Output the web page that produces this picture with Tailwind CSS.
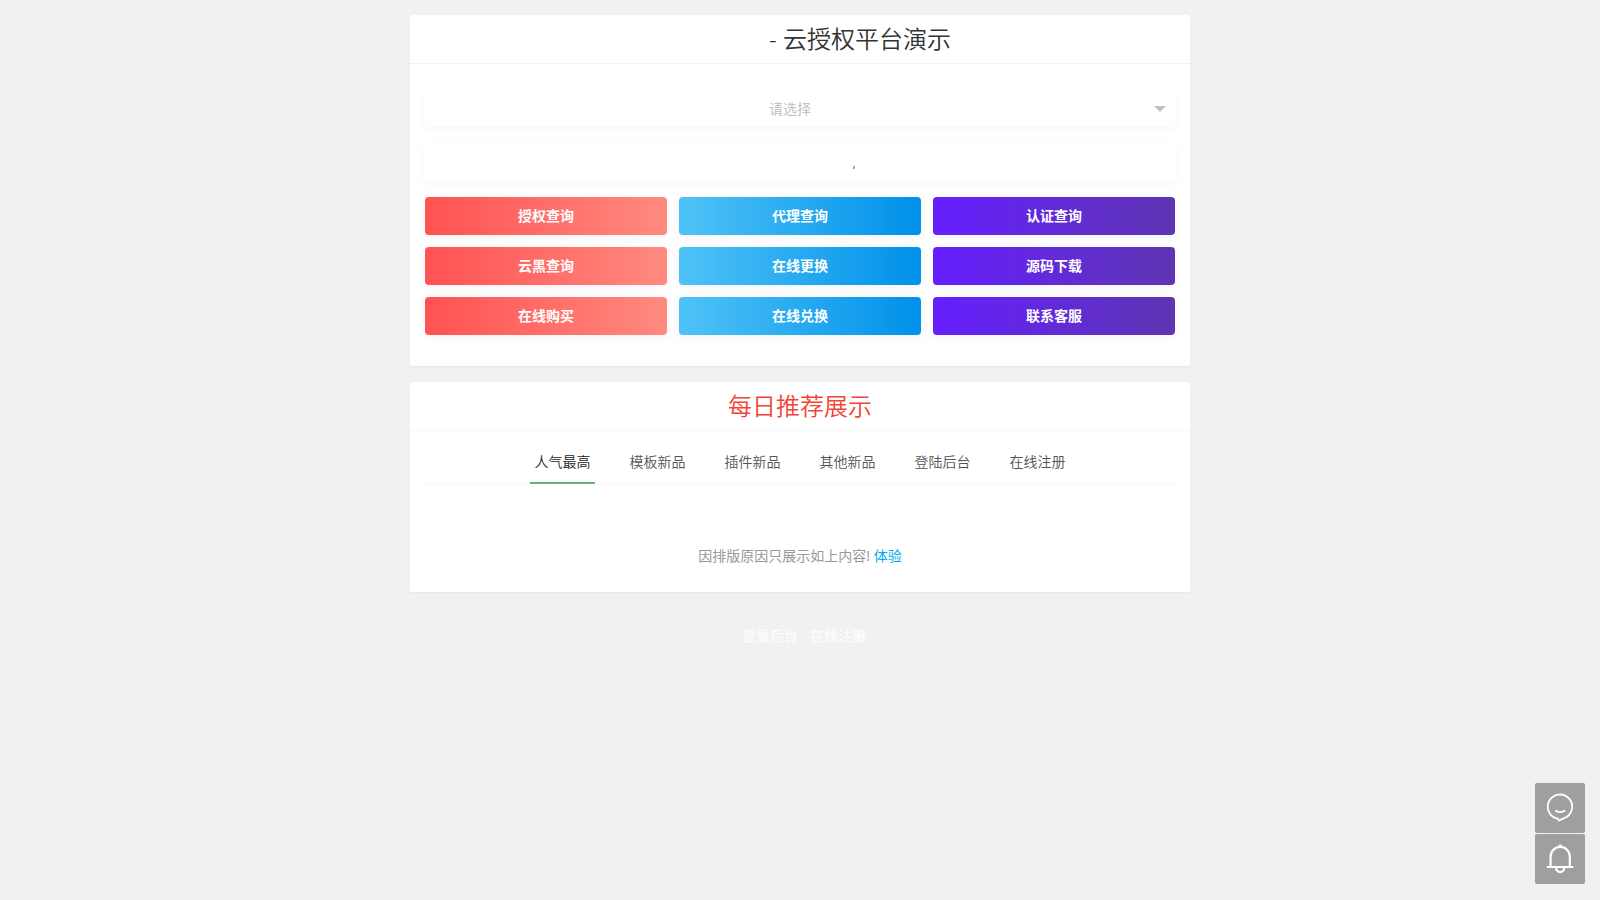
<!DOCTYPE html>
<html lang="zh-CN">
<head>
    <meta charset="UTF-8">
    <meta name="viewport" content="width=device-width, initial-scale=1.0">
    <title>云授权平台演示</title>
    <script src="https://cdn.jsdelivr.net/npm/@tailwindcss/browser@4"></script>
</head>
<body class="min-h-screen bg-[#f1f1f1] px-4 pt-[15px] font-['Noto_Sans','Noto_Sans_CJK_SC',sans-serif] text-sm text-[#333333]">
    <main class="mx-auto max-w-[780px]">
        <!-- Query panel -->
        <section class="mb-4 rounded-xs bg-white shadow-[0_1px_2px_rgba(0,0,0,0.05)]">
            <header class="border-b border-[#f2f2f2] pl-[120px] text-center">
                <h1 class="text-2xl/12 font-[350]">- 云授权平台演示</h1>
            </header>
            <form class="px-[15px] pt-[25px] pb-[31px]">
                <div class="relative mb-4">
                    <select aria-label="请选择" class="block h-[38px] w-full appearance-none rounded-xs bg-white pt-px pr-5 text-center [text-align-last:center] font-[350] text-[#bbbbbb] shadow-[0_2px_10px_rgba(0,0,0,0.04)] outline-none">
                        <option>请选择</option>
                    </select>
                    <span class="pointer-events-none absolute top-[17px] right-[9px] border-x-6 border-t-6 border-x-transparent border-t-[#c2c2c2]"></span>
                </div>
                <input type="text" aria-label="查询内容" value="," class="mb-4 block h-[38px] w-full rounded-xs bg-white pt-1 pl-[108px] text-center text-[10px] shadow-[0_2px_10px_rgba(0,0,0,0.04)] outline-none">
                <div class="grid grid-cols-3 gap-3 font-bold text-white">
                    <button type="button" class="h-[38px] rounded-sm bg-linear-to-r/srgb from-[#ff5252] to-[#ff8a80] shadow-[0_2px_10px_rgba(0,0,0,0.06)]">授权查询</button>
                    <button type="button" class="h-[38px] rounded-sm bg-linear-to-r/srgb from-[#4fc3f7] to-[#0091ea] shadow-[0_2px_10px_rgba(0,0,0,0.06)]">代理查询</button>
                    <button type="button" class="h-[38px] rounded-sm bg-linear-to-r/srgb from-[#651fff] to-[#5e35b1] shadow-[0_2px_10px_rgba(0,0,0,0.06)]">认证查询</button>
                    <button type="button" class="h-[38px] rounded-sm bg-linear-to-r/srgb from-[#ff5252] to-[#ff8a80] shadow-[0_2px_10px_rgba(0,0,0,0.06)]">云黑查询</button>
                    <button type="button" class="h-[38px] rounded-sm bg-linear-to-r/srgb from-[#4fc3f7] to-[#0091ea] shadow-[0_2px_10px_rgba(0,0,0,0.06)]">在线更换</button>
                    <button type="button" class="h-[38px] rounded-sm bg-linear-to-r/srgb from-[#651fff] to-[#5e35b1] shadow-[0_2px_10px_rgba(0,0,0,0.06)]">源码下载</button>
                    <button type="button" class="h-[38px] rounded-sm bg-linear-to-r/srgb from-[#ff5252] to-[#ff8a80] shadow-[0_2px_10px_rgba(0,0,0,0.06)]">在线购买</button>
                    <button type="button" class="h-[38px] rounded-sm bg-linear-to-r/srgb from-[#4fc3f7] to-[#0091ea] shadow-[0_2px_10px_rgba(0,0,0,0.06)]">在线兑换</button>
                    <button type="button" class="h-[38px] rounded-sm bg-linear-to-r/srgb from-[#651fff] to-[#5e35b1] shadow-[0_2px_10px_rgba(0,0,0,0.06)]">联系客服</button>
                </div>
            </form>
        </section>

        <!-- Daily picks -->
        <section class="rounded-xs bg-white shadow-[0_1px_2px_rgba(0,0,0,0.05)]">
            <header class="border-b border-[#f6f6f6] text-center">
                <h2 class="text-2xl/12 font-[350] text-[#f44336]">每日推荐展示</h2>
            </header>
            <div class="px-[15px] pt-[11px] pb-6">
                <nav class="flex justify-center gap-[30px] border-b border-[#f6f6f6] text-center font-[350] text-[#555555]">
                    <a href="#" class="-mb-px w-[65px] border-b-2 border-[#5fb878] leading-10 text-[#222222]">人气最高</a>
                    <a href="#" class="w-[65px] leading-10">模板新品</a>
                    <a href="#" class="w-[65px] leading-10">插件新品</a>
                    <a href="#" class="w-[65px] leading-10">其他新品</a>
                    <a href="#" class="w-[65px] leading-10">登陆后台</a>
                    <a href="#" class="w-[65px] leading-10">在线注册</a>
                </nav>
                <p class="pt-15 text-center leading-6 text-[#999999]">因排版原因只展示如上内容! <a href="#" class="text-[#01aaed]">体验</a></p>
            </div>
        </section>
    </main>

    <footer class="flex justify-center gap-3 pt-8 pl-2 leading-6 font-bold text-[#fbfbfb]">
        <a href="#">登录后台</a>
        <a href="#">在线注册</a>
    </footer>

    <!-- Floating buttons -->
    <div class="fixed right-[15px] bottom-4 flex flex-col gap-px">
        <button type="button" aria-label="联系客服" class="flex size-[50px] items-center justify-center rounded-xs bg-[#9f9f9f] text-white">
            <svg class="size-8" viewBox="0 0 32 32" fill="none" stroke="currentColor" stroke-width="1.8" stroke-linecap="round" stroke-linejoin="round">
                <path d="M13.8 26.7A12.2 12.2 0 1 1 20 26.2L14.8 28.6L13.8 26.7"/>
                <path d="M11.8 18.8Q16 21.6 20.6 18.8"/>
            </svg>
        </button>
        <button type="button" aria-label="消息通知" class="flex size-[50px] items-center justify-center rounded-xs bg-[#9f9f9f] text-white">
            <svg class="size-8" viewBox="0 0 32 32" fill="none" stroke="currentColor" stroke-width="2.2">
                <path d="M2.8 24H29.4M6.6 24V13.5A9.6 9.6 0 0 1 25.8 13.5V24M12 24.5A4.1 4.6 0 0 0 20.2 24.5"/>
                <path d="M16.2 1.6V4.5" stroke-width="3"/>
            </svg>
        </button>
    </div>
</body>
</html>
